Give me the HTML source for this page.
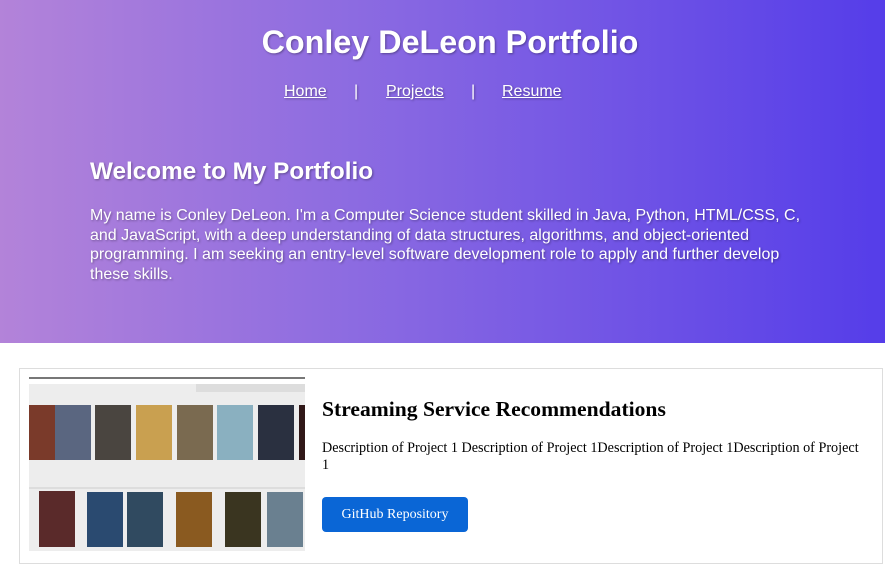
<!DOCTYPE html>
<html><head><style>
body{margin:0;width:885px;height:567px;overflow:hidden;background:#fff;font-family:"Liberation Serif",serif}
.hdr{position:absolute;left:0;top:0;width:885px;height:343px;background:linear-gradient(90deg,#b383d9,#8c6be1 40%,#553de9);color:#fff;font-family:"Liberation Sans",sans-serif;text-shadow:1px 1px 2px rgba(0,0,0,.35)}
h1{position:absolute;top:24px;left:0;width:900px;text-align:center;margin:0;font-size:32.3px;font-weight:bold}
.nav{position:absolute;top:83px;font-size:16px}
.nav a{color:#fff;text-decoration:underline}
h2{position:absolute;left:90px;top:158px;margin:0;font-size:24.3px}
p.i{position:absolute;left:90px;top:206px;width:725px;margin:0;font-size:16px;line-height:19.5px}
.card{position:absolute;left:19px;top:368px;width:862px;height:194px;border:1px solid #ddd}
.shot{position:absolute;left:9px;top:8px;width:276px;height:174px;background:#ededed;overflow:hidden}
.p{position:absolute;width:36px;height:55px}
h3{position:absolute;left:302px;top:28px;margin:0;font-size:21.6px;font-weight:bold}
.d{position:absolute;left:302px;top:71px;width:546px;font-size:14.2px;line-height:17px}
.btn{position:absolute;left:302px;top:128px;width:146px;height:35px;background:#0a66d6;color:#fff;border-radius:4px;font-size:14px;text-align:center;line-height:35px}
</style></head><body>
<div class="hdr">
<h1>Conley DeLeon Portfolio</h1>
<div class="nav" style="left:284px"><a>Home</a></div>
<div class="nav" style="left:354px">|</div>
<div class="nav" style="left:386px"><a>Projects</a></div>
<div class="nav" style="left:471px">|</div>
<div class="nav" style="left:502px"><a>Resume</a></div>
<h2>Welcome to My Portfolio</h2>
<p class="i">My name is Conley DeLeon. I'm a Computer Science student skilled in Java, Python, HTML/CSS, C, and JavaScript, with a deep understanding of data structures, algorithms, and object-oriented programming. I am seeking an entry-level software development role to apply and further develop these skills.</p>
</div>
<div class="card">
<div class="shot">
<div style="position:absolute;left:0;top:0;width:276px;height:2px;background:#777"></div>
<div style="position:absolute;left:0;top:2px;width:276px;height:5px;background:#fff"></div>
<div style="position:absolute;left:167px;top:7px;width:109px;height:8px;background:#ddd"></div>
<div class="p" style="left:-4px;top:28px;background:#7a3a2a"></div>
<div class="p" style="left:26px;top:28px;background:#5a6680"></div>
<div class="p" style="left:66px;top:28px;background:#4a4540"></div>
<div class="p" style="left:107px;top:28px;background:#c9a050"></div>
<div class="p" style="left:148px;top:28px;background:#7a6a50"></div>
<div class="p" style="left:188px;top:28px;background:#8ab0c0"></div>
<div class="p" style="left:229px;top:28px;background:#2a3040"></div>
<div class="p" style="left:270px;top:28px;background:#301818"></div>
<div style="position:absolute;left:0;top:110px;width:276px;height:2px;background:#ddd"></div>
<div class="p" style="left:10px;top:114px;height:56px;background:#5a2a2a"></div>
<div class="p" style="left:58px;top:115px;background:#2a4a70"></div>
<div class="p" style="left:98px;top:115px;background:#304a60"></div>
<div class="p" style="left:147px;top:115px;background:#8a5a20"></div>
<div class="p" style="left:196px;top:115px;background:#3a3520"></div>
<div class="p" style="left:238px;top:115px;background:#6a8090"></div>
</div>
<h3>Streaming Service Recommendations</h3>
<div class="d">Description of Project 1 Description of Project 1Description of Project 1Description of Project 1</div>
<div class="btn">GitHub Repository</div>
</div>
</body></html>
